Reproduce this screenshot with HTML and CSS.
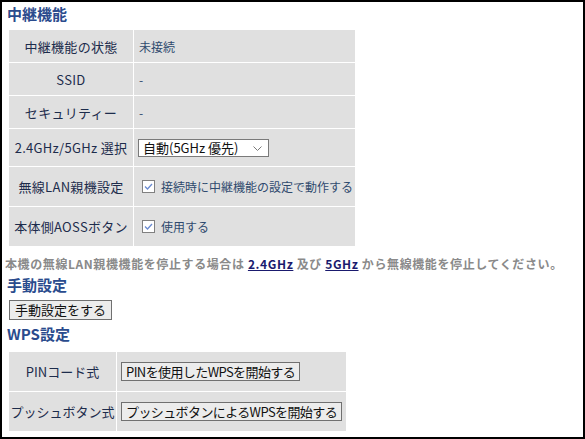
FILE: index.html
```html
<!DOCTYPE html>
<html lang="ja">
<head>
<meta charset="utf-8">
<link rel="stylesheet" href="styles.css">
</head>
<body>
<div class="frame">
  <h2 class="heading first">中継機能</h2>
  <div class="tbl tbl-main">
    <div class="lbl r32">中継機能の状態</div><div class="val r32">未接続</div>
    <div class="lbl r32">SSID</div><div class="val r32">-</div>
    <div class="lbl r32">セキュリティー</div><div class="val r32">-</div>
    <div class="lbl r37">2.4GHz/5GHz 選択</div>
    <div class="val r37">
      <span class="sel">
        <span class="sel-text">自動(5GHz 優先)</span>
        <svg class="chev" width="9" height="6" viewBox="0 0 9 6"><path d="M0.5 0.5 L4.5 4.5 L8.5 0.5" fill="none" stroke="#7a7a7a" stroke-width="1"/></svg>
      </span>
    </div>
    <div class="lbl r39">無線LAN親機設定</div>
    <div class="val r39"><span class="cb"><svg width="11" height="11" viewBox="0 0 11 11"><path d="M2 5.5 L4.5 8 L9 3" fill="none" stroke="#6b8bd0" stroke-width="1.3"/></svg></span><span class="cbl">接続時に中継機能の設定で動作する</span></div>
    <div class="lbl r39">本体側AOSSボタン</div>
    <div class="val r39"><span class="cb"><svg width="11" height="11" viewBox="0 0 11 11"><path d="M2 5.5 L4.5 8 L9 3" fill="none" stroke="#6b8bd0" stroke-width="1.3"/></svg></span><span class="cbl">使用する</span></div>
  </div>
  <p class="note">本機の無線LAN親機機能を停止する場合は <a class="lnk" href="#">2.4GHz</a> 及び <a class="lnk" href="#">5GHz</a> から無線機能を停止してください。</p>
  <h2 class="heading">手動設定</h2>
  <div class="btnrow"><button class="btn">手動設定をする</button></div>
  <h2 class="heading">WPS設定</h2>
  <div class="tbl tbl-wps">
    <div class="lbl r40">PINコード式</div><div class="val r40"><button class="btn btn-wps">PINを使用したWPSを開始する</button></div>
    <div class="lbl r40">プッシュボタン式</div><div class="val r40"><button class="btn btn-wps">プッシュボタンによるWPSを開始する</button></div>
  </div>
</div>
</body>
</html>
```
FILE: styles.css
```css
html, body {
  margin: 0;
  padding: 0;
  background: #ffffff;
}
body {
  font-family: "Noto Sans CJK JP", "Noto Sans", sans-serif;
}
.frame {
  width: 585px;
  height: 439px;
  box-sizing: border-box;
  border: 2px solid #000;
  padding: 0 0 0 5px;
  overflow: hidden;
}
.heading {
  margin: 0;
  font-size: 15px;
  line-height: 20px;
  font-weight: bold;
  color: #2a4b8d;
  height: 20px;
}
.heading.first {
  margin-top: 2px;
  margin-bottom: 6px;
}
.tbl {
  display: grid;
  gap: 1px;
  margin-left: 2px;
}
.tbl-main {
  grid-template-columns: 124px 221px;
  width: 346px;
}
.tbl-wps {
  grid-template-columns: 107px 229px;
  width: 337px;
  margin-top: 8px;
}
.lbl, .val {
  background: #e0e0e0;
  display: flex;
  align-items: center;
  white-space: nowrap;
}
.lbl {
  justify-content: center;
  font-size: 13px;
  color: #1d2c4c;
}
.tbl-main .lbl {
  letter-spacing: 0.3px;
}
.val {
  padding-left: 5px;
  font-size: 12px;
  color: #2f4a6e;
}
.tbl-wps .val {
  padding-left: 4px;
}
.r32 { height: 32px; }
.r37 { height: 37px; }
.r39 { height: 39px; }
.r40 { height: 39px; }
.sel {
  position: relative;
  display: inline-flex;
  align-items: center;
  width: 131px;
  height: 18px;
  box-sizing: border-box;
  border: 1px solid #7a7a7a;
  background: #fff;
  padding-left: 4px;
  font-size: 13px;
  line-height: 16px;
  color: #111;
  margin-left: -1px;
}
.chev {
  position: absolute;
  right: 6px;
  top: 6px;
}
.cb {
  display: inline-flex;
  align-items: center;
  justify-content: center;
  width: 13px;
  height: 13px;
  box-sizing: border-box;
  border: 1px solid #808080;
  background: #fff;
  margin-left: 3px;
  margin-right: 6px;
}
.cbl {
  font-size: 12px;
}
.note {
  margin: 10px 0 3px -2px;
  font-size: 12px;
  line-height: 16px;
  font-weight: bold;
  color: #8a8a8a;
  white-space: nowrap;
  letter-spacing: 0.6px;
}
.lnk {
  color: #1a1a6e;
  text-decoration: underline;
}
.btnrow {
  margin: 5px 0 4px 2px;
  height: 20px;
  display: flex;
  align-items: center;
}
.btn {
  font-family: "Noto Sans CJK JP", "Noto Sans", sans-serif;
  font-size: 13px;
  line-height: 16px;
  height: 20px;
  box-sizing: border-box;
  padding: 0 5px;
  margin: 0;
  border: 1px solid #707070;
  background: #ececec;
  color: #111;
  border-radius: 0;
  white-space: nowrap;
  display: inline-flex;
  align-items: center;
}
.btn-wps {
  height: 19px;
  letter-spacing: -0.6px;
  padding: 0 4px;
}
```
